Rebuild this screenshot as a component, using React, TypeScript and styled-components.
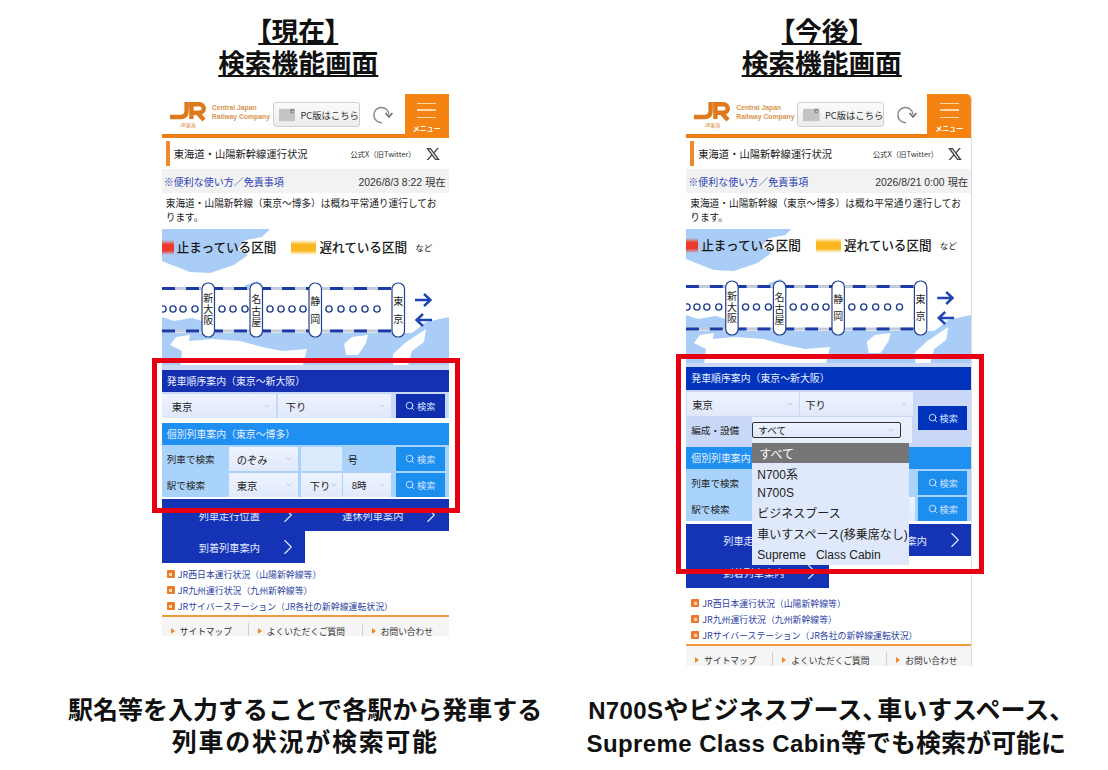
import React from 'react';
import styled, { createGlobalStyle } from 'styled-components';
import { ChevronDown, ChevronRight, Search } from 'lucide-react';
import { RiTwitterXLine } from 'react-icons/ri';

const GlobalStyle = createGlobalStyle`
  html, body {
    margin: 0;
    padding: 0;
    background: #fff;
  }
  body {
    font-family: 'Liberation Sans', 'Noto Sans CJK JP', sans-serif;
    color: #222;
  }
`;

const Slide = styled.div`
  width: 1108px;
  height: 770px;
  overflow: hidden;
  display: grid;
  grid-template-columns: 523.5px 523.5px;
  grid-template-rows: 94px 600px 1fr;
  grid-auto-flow: column;
  padding-left: 43.5px;
  box-sizing: border-box;
`;

const Column = styled.div`
  display: contents;
`;

const Heading = styled.h2`
  margin: 14px 14px 0 0;
  font-family: 'Noto Sans CJK JP', sans-serif;
  font-size: 26.7px;
  line-height: 32px;
  font-weight: 700;
  text-align: center;
  color: #111;
`;

const HeadingLine = styled.span<{ $fit?: boolean }>`
  display: block;
  text-decoration: underline;
  text-underline-offset: 2px;
  font-feature-settings: ${(p) => (p.$fit ? "'palt'" : 'normal')};
`;

const PhoneSlot = styled.div`
  display: flex;
  justify-content: center;
  align-items: flex-start;
`;

const Caption = styled.div<{ $shift: number }>`
  margin: 0 ${(p) => p.$shift}px 0 0;
  font-family: 'Liberation Sans', 'Noto Sans CJK JP', sans-serif;
  font-size: 25px;
  line-height: 32px;
  font-weight: 700;
  text-align: center;
  color: #111;
  white-space: nowrap;
`;

const CaptionLine = styled.div<{ $spacing?: number }>`
  letter-spacing: ${(p) => p.$spacing ?? 0}px;
`;

const CaptionLatin = styled.span`
  font-size: 24px;
  letter-spacing: 0.4px;
`;

const CaptionComma = styled.span`
  font-feature-settings: 'palt';
  letter-spacing: 2.5px;
`;

const Phone = styled.div<{ $width: number; $height: number }>`
  position: relative;
  width: ${(p) => p.$width}px;
  height: ${(p) => p.$height}px;
`;

const PhoneBody = styled.div<{ $framed?: boolean }>`
  height: 100%;
  overflow: hidden;
  background: #fff;
  font-family: 'Noto Sans CJK JP', sans-serif;
  border-top-right-radius: ${(p) => (p.$framed ? '5px' : '0')};
  box-shadow: ${(p) => (p.$framed ? '1px 0 0 #dedede' : 'none')};
`;

const AppBar = styled.header`
  height: 40px;
  display: flex;
  align-items: stretch;
  border-bottom: 4px solid #f07d12;
`;

const LogoBox = styled.div`
  width: 36px;
  margin: 8px 0 0 8px;
  display: flex;
  flex-direction: column;
  align-items: center;
  color: #d9812f;
  font-size: 5px;
  line-height: 6px;
`;

const CompanyName = styled.div`
  width: 58px;
  margin: 10px 0 0 6px;
  font-family: 'Liberation Sans', sans-serif;
  font-size: 6.8px;
  line-height: 8.5px;
  font-weight: 700;
  color: #d9954f;
  white-space: nowrap;
`;

const PcButton = styled.div`
  width: 87px;
  height: 25px;
  margin: 8px 0 0 3px;
  box-sizing: border-box;
  display: flex;
  align-items: center;
  gap: 5px;
  padding-left: 5px;
  border: 1px solid #cfcfcf;
  border-radius: 3px;
  background: linear-gradient(#fbfbfb, #ececec);
  font-size: 9.3px;
  color: #333;
  white-space: nowrap;
`;

const RefreshSlot = styled.div`
  margin: 10px 0 0 11px;
`;

const MenuButton = styled.div`
  margin-left: auto;
  width: 44px;
  margin-bottom: -4px;
  background: #f58312;
  display: flex;
  flex-direction: column;
  align-items: center;
  padding-top: 9px;
  box-sizing: border-box;
  color: #fff;
  font-size: 7px;
  line-height: 9px;
  font-weight: 700;
`;

const MenuBars = styled.div`
  width: 19px;
  height: 15px;
  margin-bottom: 6px;
  border-top: 1.5px solid #ffd9ad;
  border-bottom: 1.5px solid #ffd9ad;
  box-sizing: border-box;
  position: relative;

  &::after {
    content: '';
    position: absolute;
    left: 0;
    right: 0;
    top: 5px;
    height: 1.5px;
    background: #ffd9ad;
  }
`;

const TitleBar = styled.div`
  height: 31px;
  display: flex;
  align-items: center;
  padding: 0 8px 0 4px;
`;

const TitleText = styled.div`
  border-left: 4px solid #ef8a2a;
  height: 25px;
  padding-left: 4px;
  font-size: 10.3px;
  line-height: 25px;
  color: #222;
  white-space: nowrap;
`;

const TwitterLabel = styled.div`
  margin-left: auto;
  font-size: 7.4px;
  color: #333;
  white-space: nowrap;
`;

const TwitterMark = styled.div`
  display: flex;
  margin-left: 9px;
  color: #444;
`;

const StatusRow = styled.div`
  height: 24px;
  display: flex;
  align-items: center;
  justify-content: space-between;
  padding: 0 3px 0 2px;
  background: #f2f2f2;
  font-size: 10px;
`;

const HelpLink = styled.span`
  color: #2b3fb5;
`;

const Timestamp = styled.span`
  font-family: 'Liberation Sans', 'Noto Sans CJK JP', sans-serif;
  font-size: 10.4px;
  color: #333;
`;

const Message = styled.div`
  height: 36px;
  box-sizing: border-box;
  padding: 3px 8px 0 4px;
  font-size: 9.7px;
  line-height: 14px;
  color: #222;
`;

const MapArea = styled.div`
  position: relative;
`;

const MapCanvas = styled.svg`
  display: block;
`;

const Legend = styled.div<{ $top: number }>`
  position: absolute;
  left: 0;
  top: ${(p) => p.$top}px;
  display: flex;
  align-items: center;
  font-size: 12.6px;
  font-weight: 500;
  line-height: 18px;
  color: #1a1a1a;
  white-space: nowrap;
`;

const Swatch = styled.span<{ $color: string; $width: number; $before?: number }>`
  display: block;
  width: ${(p) => p.$width}px;
  height: 15px;
  margin: 0 3px 0 ${(p) => p.$before ?? 0}px;
  background: linear-gradient(
    transparent,
    ${(p) => p.$color} 30%,
    ${(p) => p.$color} 70%,
    transparent
  );
`;

const LegendNote = styled.span`
  margin-left: 8px;
  font-size: 8.5px;
  font-weight: 400;
`;

const Section = styled.div<{ $tone: string; $pad?: number }>`
  background: ${(p) => p.$tone};
  padding-top: ${(p) => p.$pad ?? 0}px;
`;

const SectionBar = styled.div<{ $color: string; $height?: number }>`
  height: ${(p) => p.$height ?? 22}px;
  padding-left: 5px;
  margin-bottom: 2px;
  background: ${(p) => p.$color};
  color: #e8eeff;
  font-size: 9.9px;
  line-height: ${(p) => p.$height ?? 22}px;
  white-space: nowrap;
`;

const Row = styled.div<{ $gap?: number }>`
  display: flex;
  height: 24px;
  margin-bottom: ${(p) => p.$gap ?? 2}px;
`;

const RowLabel = styled.div<{ $width: number }>`
  width: ${(p) => p.$width}px;
  flex: none;
  padding-left: 5px;
  box-sizing: border-box;
  display: flex;
  align-items: center;
  font-size: 9.6px;
  color: #222;
  white-space: nowrap;
`;

const SelectBox = styled.div<{
  $width: number;
  $start?: number;
  $bordered?: boolean;
  $small?: boolean;
  $inset?: number;
}>`
  width: ${(p) => p.$width}px;
  flex: none;
  margin-left: ${(p) => p.$start ?? 0}px;
  box-sizing: border-box;
  display: flex;
  align-items: center;
  justify-content: space-between;
  padding: 0 5px 0 ${(p) => p.$inset ?? 8}px;
  background: linear-gradient(#eef3ff, #e0e9fb);
  border: ${(p) => (p.$bordered ? '1px solid #333' : 'none')};
  border-radius: ${(p) => (p.$bordered ? '2px' : '0')};
  font-size: ${(p) => (p.$small ? 9.6 : 10.3)}px;
  color: #222;
  white-space: nowrap;

  svg {
    flex: none;
    color: #a9b5c7;
  }
`;

const NumberSlot = styled.div`
  width: 41px;
  margin-left: 3px;
  flex: none;
  background: #dbeafc;
`;

const NumberSuffix = styled.div`
  width: 49px;
  padding-left: 6px;
  box-sizing: border-box;
  display: flex;
  align-items: center;
  font-size: 10px;
  color: #222;
`;

const SearchButton = styled.div<{ $color: string }>`
  width: 49px;
  height: 24px;
  flex: none;
  margin-left: auto;
  margin-right: 4px;
  display: flex;
  align-items: center;
  justify-content: center;
  gap: 2px;
  background: ${(p) => p.$color};
  color: #d5e3ff;
  font-size: 9.2px;
  white-space: nowrap;
`;

const FilterGrid = styled.div`
  display: flex;
  padding-bottom: 4px;
`;

const FilterRows = styled.div`
  width: 226px;
  flex: none;
`;

const FilterStrip = styled.div`
  height: 26px;
  display: flex;
  align-items: center;
  background: linear-gradient(90deg, transparent 66px, #e8effd 66px);
`;

const FilterAction = styled.div`
  flex: 1;
  display: flex;
  align-items: center;
`;

const Dropdown = styled.ul`
  position: absolute;
  left: 66px;
  top: 349px;
  width: 157px;
  margin: 0;
  padding: 0;
  list-style: none;
  background: #dfe9fb;
  font-family: 'Liberation Sans', 'Noto Sans CJK JP', sans-serif;
  color: #222;
  z-index: 1;
`;

const DropdownItem = styled.li<{ $height: number; $active?: boolean }>`
  height: ${(p) => p.$height}px;
  padding-left: ${(p) => (p.$active ? 7 : 5)}px;
  display: flex;
  align-items: center;
  font-size: 12px;
  white-space: pre;
  background: ${(p) => (p.$active ? '#757575' : 'transparent')};
  color: ${(p) => (p.$active ? '#fff' : '#222')};
`;

const NavGrid = styled.div<{ $gap: number }>`
  display: grid;
  grid-template-columns: 1fr 1fr;
  margin-top: ${(p) => p.$gap}px;
`;

const NavItem = styled.div`
  height: 32px;
  display: flex;
  align-items: center;
  padding-left: 37px;
  background: #1433b5;
  color: #e3e9ff;
  font-size: 10.2px;
  white-space: nowrap;

  svg {
    margin-left: 15px;
    flex: none;
  }
`;

const LinkList = styled.ul<{ $top: number }>`
  margin: 0;
  padding: ${(p) => p.$top}px 0 0 5px;
  list-style: none;
`;

const LinkItem = styled.li`
  height: 16px;
  display: flex;
  align-items: center;
  gap: 3px;
  font-size: 8.9px;
  color: #2b3f9f;
  white-space: nowrap;

  &::before {
    content: '';
    width: 8px;
    height: 8px;
    flex: none;
    border-radius: 1px;
    background: linear-gradient(#fbd9b5, #fbd9b5) center / 3px 3px no-repeat, #ec7a2c;
  }
`;

const Footer = styled.div`
  margin-top: 1px;
  height: 40px;
  display: flex;
  padding-top: 6px;
  box-sizing: border-box;
  background: #f5f5f5;
  border-top: 2px solid #ef9a3c;
`;

const FooterItem = styled.div<{ $width: number }>`
  width: ${(p) => p.$width}px;
  height: 16px;
  flex: none;
  display: flex;
  align-items: center;
  gap: 5px;
  padding-left: 9px;
  box-sizing: border-box;
  border-right: 1px solid #cfcfcf;
  font-size: 8.7px;
  color: #333;
  white-space: nowrap;

  &::before {
    content: '';
    border-left: 4px solid #ef8a2a;
    border-top: 3px solid transparent;
    border-bottom: 3px solid transparent;
  }

  &:last-child {
    border-right: none;
  }
`;

const Highlight = styled.div<{ $top: number; $height: number }>`
  position: absolute;
  left: -10px;
  top: ${(p) => p.$top}px;
  width: 308px;
  height: ${(p) => p.$height}px;
  box-sizing: border-box;
  border: 5px solid #e60012;
  pointer-events: none;
  z-index: 2;
`;

const stations = [
  { x: 46, chars: ['新', '大', '阪'], y: [73, 84, 95] },
  { x: 94, chars: ['名', '古', '屋'], y: [74, 86, 97] },
  { x: 153, chars: ['静', '岡'], y: [76, 93.5] },
  { x: 236, chars: ['東', '京'], y: [76, 93.5] },
];

const dots = [1, 11, 21, 33, 60, 71, 83, 108, 119, 130, 141, 167, 179, 191, 203, 215];

// map drawing: sea, islands, line diagram
const RouteMap = ({ width, height, offset }: { width: number; height: number; offset: number }) => (
  <MapCanvas width={width} height={height} viewBox={`0 ${offset} 287 ${height}`} preserveAspectRatio="none">
    <rect x="0" y="-4" width="287" height="144" fill="#fff" />
    <path d="M0 0 H108 L100 8 L84 11 L76 20 L86 26 L72 36 L48 44 L28 43 L10 36 L0 32 Z" fill="#a9cdf7" />
    <path d="M78 66 L84 56 L96 52 L100 60 L108 70 L90 68 Z" fill="#a9cdf7" />
    <path d="M0 104 H250 L264 93 L287 88 V140 H0 Z" fill="#a9cdf7" />
    <path d="M18 140 L20 122 L8 116 L14 108 L28 106 L27 112 L50 110 L78 112 L100 118 L120 122 L145 120 L140 140 Z" fill="#fff" />
    <path d="M182 115 L190 108 L206 106 L204 114 L196 126 L184 126 Z" fill="#fff" />
    <path d="M231 140 L231 125 L243 114 L255 106 L264 100 L262 113 L250 122 L245 140 Z" fill="#fff" />
    <rect x="0" y="59" width="236" height="43" fill="#fff" />
    <path d="M0 88 L12 92 L30 89 L40 92 V102 H0 Z" fill="#a9cdf7" />
    <g fill="none" strokeWidth="2.8">
      <path d="M0 59.5 H236 M0 102 H236" stroke="#c3cbdb" />
      <path d="M0 59.5 H236 M0 102 H236" stroke="#1a3ba8" strokeDasharray="13 11" />
    </g>
    {dots.map((cx) => (
      <circle key={cx} cx={cx} cy="80" r="3.1" fill="#fff" stroke="#23408f" strokeWidth="1.4" />
    ))}
    {stations.map((s) => (
      <g key={s.x}>
        <rect x={s.x - 6} y="54" width="12.5" height="54" rx="6" fill="#fff" stroke="#23408f" strokeWidth="1.2" />
        {s.chars.map((c, i) => (
          <text key={c} x={s.x + 0.2} y={s.y[i]} fontSize="10" textAnchor="middle" fill="#222" fontFamily="'Noto Sans CJK JP', sans-serif">
            {c}
          </text>
        ))}
      </g>
    ))}
    <g fill="none" stroke="#1f45b5" strokeWidth="2.4">
      <path d="M253 71 H268 M262 65 L268.5 71 L262 77" />
      <path d="M270 91 H255 M261 85 L254.5 91 L261 97" />
    </g>
  </MapCanvas>
);

const JrLogo = () => (
  <svg width="36" height="20" viewBox="0 0 36 20">
    <g fill="none" stroke="#dd7a1c" strokeWidth="4.4">
      <path d="M16.6 0 V9 Q16.6 15 10.5 15 H0" />
      <path d="M19 2.2 H29.5 A4 4 0 0 1 29.5 10.8 H23" />
      <path d="M21.4 2 V17" />
      <path d="M26.5 10 L34 18" />
    </g>
  </svg>
);

const PcIcon = () => (
  <svg width="19" height="14" viewBox="0 0 19 14">
    <rect width="19" height="14" fill="#c4c4c4" />
    <path d="M13 0 H17 V5 H13 Z" fill="#8c8c8c" />
    <rect x="15" y="2.5" width="1" height="1" fill="#fff" />
  </svg>
);

const RefreshIcon = () => (
  <svg width="22" height="22" viewBox="0 0 22 22">
    <path d="M18 10.5 A7.6 7.6 0 1 0 11 18.6" fill="none" stroke="#8a8a8a" strokeWidth="1.5" />
    <path d="M14.6 9 L18 13 L21.4 9" fill="none" stroke="#6e6e6e" strokeWidth="1.7" />
  </svg>
);

const Select = ({
  label,
  width,
  start,
  bordered,
  small,
  inset,
}: {
  label: string;
  width: number;
  start?: number;
  bordered?: boolean;
  small?: boolean;
  inset?: number;
}) => (
  <SelectBox $width={width} $start={start} $bordered={bordered} $small={small} $inset={inset}>
    {label}
    <ChevronDown size={8} strokeWidth={2} />
  </SelectBox>
);

const FindButton = ({ color = '#1c8eee' }: { color?: string }) => (
  <SearchButton $color={color}>
    <Search size={10} strokeWidth={2.2} />
    検索
  </SearchButton>
);

const PhoneTop = ({
  date,
  mapHeight,
  mapOffset,
  legendTop,
  width,
}: {
  date: string;
  mapHeight: number;
  mapOffset: number;
  legendTop: number;
  width: number;
}) => (
  <>
    <AppBar>
      <LogoBox>
        <JrLogo />
        JR東海
      </LogoBox>
      <CompanyName>
        Central Japan
        <br />
        Railway Company
      </CompanyName>
      <PcButton>
        <PcIcon />
        PC版はこちら
      </PcButton>
      <RefreshSlot>
        <RefreshIcon />
      </RefreshSlot>
      <MenuButton>
        <MenuBars />
        メニュー
      </MenuButton>
    </AppBar>
    <TitleBar>
      <TitleText>東海道・山陽新幹線運行状況</TitleText>
      <TwitterLabel>公式X（旧Twitter）</TwitterLabel>
      <TwitterMark>
        <RiTwitterXLine size={16} />
      </TwitterMark>
    </TitleBar>
    <StatusRow>
      <HelpLink>※便利な使い方／免責事項</HelpLink>
      <Timestamp>{date} 現在</Timestamp>
    </StatusRow>
    <Message>東海道・山陽新幹線（東京〜博多）は概ね平常通り運行しております。</Message>
    <MapArea>
      <RouteMap width={width} height={mapHeight} offset={mapOffset} />
      <Legend $top={legendTop}>
        <Swatch $color="#ec3a2a" $width={12} />
        止まっている区間
        <Swatch $color="#fbb81e" $width={25} $before={15} />
        遅れている区間
        <LegendNote>など</LegendNote>
      </Legend>
    </MapArea>
  </>
);

const TrainRows = () => (
  <Section $tone="#a9d3fb">
    <SectionBar $color="#1f90f2">個別列車案内（東京〜博多）</SectionBar>
    <Row>
      <RowLabel $width={67}>列車で検索</RowLabel>
      <Select label="のぞみ" width={69} />
      <NumberSlot />
      <NumberSuffix>号</NumberSuffix>
      <FindButton />
    </Row>
    <Row $gap={1}>
      <RowLabel $width={67}>駅で検索</RowLabel>
      <Select label="東京" width={69} />
      <Select label="下り" width={41} start={3} inset={9} />
      <Select label="8時" width={48} start={1} inset={9} small />
      <FindButton />
    </Row>
  </Section>
);

const PhoneBottom = ({ navGap, linkTop }: { navGap: number; linkTop: number }) => (
  <>
    <NavGrid $gap={navGap}>
      <NavItem>
        列車走行位置
        <ChevronRight size={26} strokeWidth={1} />
      </NavItem>
      <NavItem>
        運休列車案内
        <ChevronRight size={26} strokeWidth={1} />
      </NavItem>
      <NavItem>
        到着列車案内
        <ChevronRight size={26} strokeWidth={1} />
      </NavItem>
    </NavGrid>
    <LinkList $top={linkTop}>
      <LinkItem>JR西日本運行状況（山陽新幹線等）</LinkItem>
      <LinkItem>JR九州運行状況（九州新幹線等）</LinkItem>
      <LinkItem>JRサイバーステーション（JR各社の新幹線運転状況）</LinkItem>
    </LinkList>
    <Footer>
      <FooterItem $width={87}>サイトマップ</FooterItem>
      <FooterItem $width={114}>よくいただくご質問</FooterItem>
      <FooterItem $width={84}>お問い合わせ</FooterItem>
    </Footer>
  </>
);

const CurrentPhone = () => (
  <Phone $width={287} $height={542}>
    <PhoneBody>
      <PhoneTop date="2026/8/3 8:22" mapHeight={136} mapOffset={0} legendTop={9} width={287} />
      <Section $tone="#c9d8f7" $pad={5}>
        <SectionBar $color="#1530b0">発車順序案内（東京〜新大阪）</SectionBar>
        <Row $gap={5}>
          <Select label="東京" width={114} inset={10} />
          <Select label="下り" width={113} start={2} />
          <FindButton color="#0f2fae" />
        </Row>
      </Section>
      <TrainRows />
      <PhoneBottom navGap={2} linkTop={3} />
    </PhoneBody>
    <Highlight $top={264} $height={155} />
  </Phone>
);

const dropdownOptions = [
  { label: 'N700系', height: 21 },
  { label: 'N700S', height: 18 },
  { label: 'ビジネスブース', height: 21 },
  { label: '車いすスペース(移乗席なし)', height: 21 },
  { label: 'Supreme   Class Cabin', height: 21 },
];

const NextPhone = () => (
  <Phone $width={285} $height={572}>
    <PhoneBody $framed>
      <PhoneTop date="2026/8/21 0:00" mapHeight={134} mapOffset={2} legendTop={7} width={285} />
      <Section $tone="#c9d8f7" $pad={4}>
        <SectionBar $color="#0033bb" $height={23}>
          発車順序案内（東京〜新大阪）
        </SectionBar>
        <FilterGrid>
          <FilterRows>
            <Row $gap={1}>
              <Select label="東京" width={112} start={1} inset={5} />
              <Select label="下り" width={113} start={1} inset={5} />
            </Row>
            <FilterStrip>
              <RowLabel $width={66}>編成・設備</RowLabel>
              <Select label="すべて" width={149} bordered small inset={5} />
            </FilterStrip>
          </FilterRows>
          <FilterAction>
            <FindButton color="#0033bb" />
          </FilterAction>
        </FilterGrid>
      </Section>
      <TrainRows />
      <PhoneBottom navGap={3} linkTop={7} />
    </PhoneBody>
    <Dropdown>
      <DropdownItem $height={20} $active>
        すべて
      </DropdownItem>
      {dropdownOptions.map((o) => (
        <DropdownItem key={o.label} $height={o.height}>
          {o.label}
        </DropdownItem>
      ))}
    </Dropdown>
    <Highlight $top={260} $height={220} />
  </Phone>
);

export default function App() {
  return (
    <>
      <GlobalStyle />
      <Slide>
        <Column>
          <Heading>
            <HeadingLine $fit>【現在】</HeadingLine>
            <HeadingLine>検索機能画面</HeadingLine>
          </Heading>
          <PhoneSlot>
            <CurrentPhone />
          </PhoneSlot>
          <Caption $shift={0}>
            <CaptionLine>駅名等を入力することで各駅から発車する</CaptionLine>
            <CaptionLine $spacing={1.7}>列車の状況が検索可能</CaptionLine>
          </Caption>
        </Column>
        <Column>
          <Heading>
            <HeadingLine $fit>【今後】</HeadingLine>
            <HeadingLine>検索機能画面</HeadingLine>
          </Heading>
          <PhoneSlot>
            <NextPhone />
          </PhoneSlot>
          <Caption $shift={5}>
            <CaptionLine>
              <CaptionLatin>N700S</CaptionLatin>やビジネスブース<CaptionComma>、</CaptionComma>車いすスペース
              <CaptionComma>、</CaptionComma>
            </CaptionLine>
            <CaptionLine>
              <CaptionLatin>Supreme Class Cabin</CaptionLatin>等でも検索が可能に
            </CaptionLine>
          </Caption>
        </Column>
      </Slide>
    </>
  );
}
